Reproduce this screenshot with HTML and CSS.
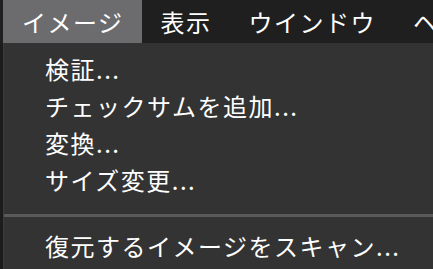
FILE: index.html
```
<!DOCTYPE html>
<html lang="ja">
	<head>
		<meta charset="UTF-8" />
		<title>イメージ メニュー</title>
		<link rel="stylesheet" href="styles.css">
	</head>
	<body>
		<!-- メニューバー -->
		<nav class="menubar">
			<span class="menubar__item is-open">イメージ</span>
			<span class="menubar__item">表示</span>
			<span class="menubar__item">ウインドウ</span>
			<span class="menubar__item">ヘルプ</span>
		</nav>

		<!-- ドロップダウン -->
		<ul class="dropdown">
			<li class="dropdown__item">検証...</li>
			<li class="dropdown__item">チェックサムを追加...</li>
			<li class="dropdown__item">変換...</li>
			<li class="dropdown__item">サイズ変更...</li>
			<li class="dropdown__separator"></li>
			<li class="dropdown__item">復元するイメージをスキャン...</li>
		</ul>
	</body>
</html>
```

FILE: styles.css
```
html,
body {
	margin: 0;
	padding: 0;
	height: 100%;
}

body {
	font-family: "Noto Sans CJK JP", "Noto Sans", sans-serif;
	background-color: #1c1c1c;
	color: #fff;
	overflow: hidden;
	display: flex;
	flex-direction: column;
}

/* メニューバー */
.menubar {
	display: flex;
	height: 43px;
	padding-left: 3px;
	background-color: #1f1f1f;
	white-space: nowrap;
	overflow: hidden;
}

.menubar__item {
	display: flex;
	align-items: center;
	padding: 0 18px 0 19px;
	font-size: 24px;
	letter-spacing: 1.5px;
}

.menubar__item.is-open {
	background-color: #6c6c6f;
}

/* ドロップダウン */
.dropdown {
	flex: 1;
	list-style: none;
	margin: 0 0 0 3px;
	padding: 7px 0 0;
	background-color: #333333;
	border-left: 1px solid #3c3c3c;
}

.dropdown__item {
	height: 37px;
	line-height: 37px;
	padding-left: 41px;
	font-size: 24px;
	letter-spacing: 1.5px;
	white-space: nowrap;
}

.dropdown__separator {
	height: 3px;
	margin: 16px 0 10px;
	background-color: #5a5a5a;
}
```
